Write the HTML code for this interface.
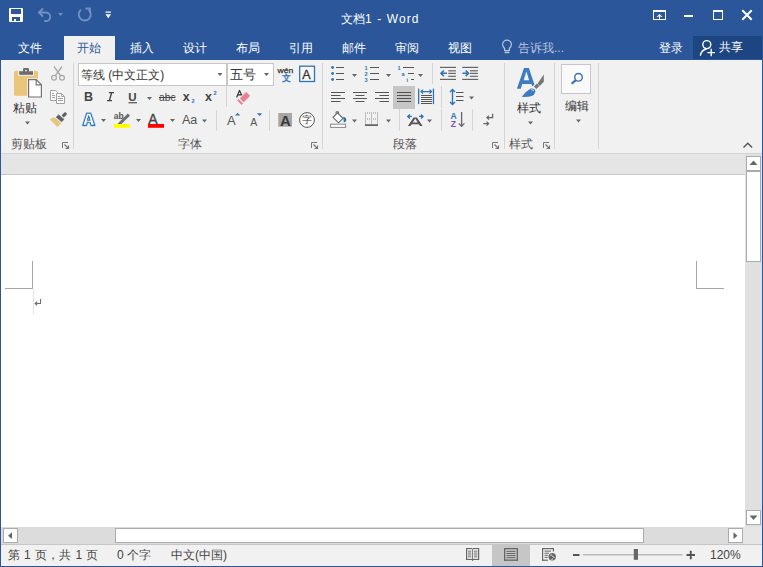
<!DOCTYPE html>
<html><head><meta charset="utf-8">
<style>
*{margin:0;padding:0;box-sizing:border-box}
html,body{width:763px;height:567px;overflow:hidden;background:#2B579A;font-family:"Liberation Sans",sans-serif;position:relative}
.a{position:absolute}
.t{position:absolute;font-size:12px;line-height:14px;white-space:nowrap;color:#444}
.w{color:#fff}
</style></head><body>
<!-- title -->
<div class="t w" style="left:341px;top:12px;">文档<span style="letter-spacing:1.1px">1 - Word</span></div>

<svg class="a" style="left:0;top:0" width="763" height="60" viewBox="0 0 763 60">
 <!-- save -->
 <rect x="9" y="8" width="14" height="14" rx="1" fill="#fff"/>
 <rect x="11" y="9" width="10" height="5" fill="#2B579A"/>
 <rect x="12" y="17" width="8" height="4" fill="#2B579A"/>
 <rect x="14" y="19" width="2" height="2" fill="#fff"/>
 <!-- undo -->
 <g stroke="#7391C0" stroke-width="1.8" fill="none" stroke-linecap="round">
  <path d="M39 12.5H46A4.2 4.2 0 0 1 46 21H45"/>
  <path d="M42.5 9L39 12.5L42.5 16"/>
 </g>
 <path d="M58 13h5l-2.5 3z" fill="#7391C0"/>
 <!-- redo/repeat -->
 <g stroke="#7391C0" stroke-width="1.8" fill="none">
  <path d="M81 9.8A6 6 0 1 0 88.5 9.8"/>
  <path d="M85.5 8.5H90V13"/>
 </g>
 <!-- customize -->
 <rect x="105.5" y="11.5" width="5.5" height="1.2" fill="#fff"/>
 <path d="M105.5 14.3h5.5l-2.75 4z" fill="#fff"/>
 <!-- window controls -->
 <g fill="#fff">
  <rect x="653" y="10" width="13" height="2"/>
  <rect x="653" y="10" width="1" height="10"/>
  <rect x="665" y="10" width="1" height="10"/>
  <rect x="653" y="19" width="13" height="1"/>
  <rect x="659" y="14.5" width="1" height="5"/>
  <path d="M656.5 17L659.5 14L662.5 17H661L659.5 15.5L658 17Z"/>
  <rect x="684" y="15" width="9" height="2"/>
  <rect x="713" y="10" width="10" height="2"/>
  <rect x="713" y="10" width="1" height="10"/>
  <rect x="722" y="10" width="1" height="10"/>
  <rect x="713" y="19" width="10" height="1"/>
 </g>
 <path d="M742.3 10.3L751.7 19.7M751.7 10.3L742.3 19.7" stroke="#fff" stroke-width="2"/>
 <!-- lightbulb -->
 <g fill="none" stroke="#B9C6DC" stroke-width="1.2">
  <path d="M504.6 50.5V48.5C503.2 47 502.6 45.8 502.6 44.6A4.4 4.4 0 0 1 511.4 44.6C511.4 45.8 510.8 47 509.4 48.5V50.5Z"/>
 </g>
 <rect x="504.6" y="51.6" width="4.8" height="1.6" fill="#B9C6DC"/>
 <!-- share person -->
 <g fill="none" stroke="#fff" stroke-width="1.4">
  <circle cx="706.8" cy="44.6" r="4"/>
  <path d="M700.3 55.6C701 52 703.5 49.6 706.5 49"/>
  <path d="M711.2 48.8V56.3M707.4 52.6H714.9"/>
 </g>
</svg>

<!-- tabs -->
<div class="a" style="left:64px;top:36px;width:51px;height:24px;background:#F1F1F1"></div>
<div class="t w" style="left:18px;top:41px">文件</div>
<div class="t" style="left:77px;top:41px;color:#2B579A">开始</div>
<div class="t w" style="left:130px;top:41px">插入</div>
<div class="t w" style="left:183px;top:41px">设计</div>
<div class="t w" style="left:236px;top:41px">布局</div>
<div class="t w" style="left:289px;top:41px">引用</div>
<div class="t w" style="left:342px;top:41px">邮件</div>
<div class="t w" style="left:395px;top:41px">审阅</div>
<div class="t w" style="left:448px;top:41px">视图</div>
<div class="t" style="left:518px;top:41px;color:#B9C6DC">告诉我...</div>
<div class="t w" style="left:659px;top:41px">登录</div>
<div class="a" style="left:693px;top:36px;width:69px;height:23px;background:#1C4581"></div>
<div class="t w" style="left:719px;top:40px">共享</div>
<!-- person icon redrawn over share bg -->
<svg class="a" style="left:0;top:0" width="763" height="60" viewBox="0 0 763 60">
 <g fill="none" stroke="#fff" stroke-width="1.4">
  <circle cx="706.8" cy="44.6" r="4"/>
  <path d="M700.3 55.6C701 52 703.5 49.6 706.5 49"/>
  <path d="M711.2 48.8V56.3M707.4 52.6H714.9"/>
 </g>
</svg>

<!-- ribbon -->
<div class="a" style="left:1px;top:60px;width:761px;height:93px;background:#F1F1F1"></div>
<div class="a" style="left:1px;top:153px;width:761px;height:1px;background:#D5D5D5"></div>
<!-- combo boxes -->
<div class="a" style="left:78px;top:63px;width:149px;height:23px;background:#fff;border:1px solid #C6C6C6"></div>
<div class="a" style="left:227px;top:63px;width:47px;height:23px;background:#fff;border:1px solid #C6C6C6"></div>
<div class="t" style="left:81px;top:68px;color:#333">等线 (中文正文)</div>
<div class="t" style="left:229.5px;top:68px;color:#333;font-size:12.5px">五号</div>
<svg class="a" style="left:0;top:0" width="763" height="160" viewBox="0 0 763 160">
 <rect x="14" y="70.8" width="24" height="25" rx="1.5" fill="#EAC67A"/>
 <rect x="18" y="70" width="16" height="5.8" fill="#F1F1F1"/>
 <rect x="19.2" y="71.2" width="13.8" height="3.6" fill="#6D6D6D"/>
 <rect x="23" y="68" width="6" height="4" rx="1.3" fill="#6D6D6D"/>
 <circle cx="26" cy="70.6" r="0.9" fill="#F1F1F1"/>
 <path d="M27.2 78.2H36.8L42.8 84.2V98.4H27.2Z" fill="#F1F1F1"/>
 <path d="M28.6 79.6H36.2L41.4 84.8V97H28.6Z" fill="#fff" stroke="#737373" stroke-width="1.2"/>
 <path d="M36.2 79.6V84.8H41.4" fill="none" stroke="#737373" stroke-width="1.2"/>

 <g fill="none" stroke="#A9A9A9" stroke-width="1.3">
  <path d="M54 66.5L60.5 75.5M62 66.5L55.5 75.5"/>
  <circle cx="54" cy="77.8" r="2.4"/>
  <circle cx="62" cy="77.8" r="2.4"/>
 </g>

 <g stroke="#A2A2A2" stroke-width="1">
  <path d="M50.5 90.5H55.5L57.5 92.5V100.5H50.5Z" fill="#FBFBFB"/>
  <path d="M56.5 93.5H61.5L64.5 96.5V103.5H56.5Z" fill="#FBFBFB"/>
  <path d="M61.5 93.5V96.5H64.5" fill="none"/>
 </g>
 <g fill="#A2A2A2">
  <rect x="52" y="93" width="2" height="1"/><rect x="52" y="95" width="3" height="1"/><rect x="52" y="97" width="3" height="1"/>
  <rect x="58" y="96" width="2" height="1"/><rect x="58" y="98" width="5" height="1"/><rect x="58" y="100" width="5" height="1"/>
 </g>

 <path d="M50 119.3L54.5 117.6L61 123.2L57.4 126.8Z" fill="#E8C47E" stroke="#E8C47E" stroke-width="0.5" stroke-linejoin="round"/>
 <path d="M58.6 114.8L64 119.4L61.6 121.8L56.2 117.2Z" fill="#606060" stroke="#606060" stroke-width="0.6" stroke-linejoin="round"/>
 <path d="M61.6 115.2L64.4 112.4Q65.2 111.8 66 112.6L66.6 113.2Q67.2 114 66.6 114.8L63.8 117.4Z" fill="#606060"/>
<g fill="none" stroke="#777" stroke-width="1"><path d="M62.5 148V142.5H68"/></g><path d="M64.5 144.5L68.5 148.5M65.5 148.5H68.5V145.5" stroke="#777" stroke-width="1.2" fill="none"/><g fill="none" stroke="#777" stroke-width="1"><path d="M311.5 148V142.5H317"/></g><path d="M313.5 144.5L317.5 148.5M314.5 148.5H317.5V145.5" stroke="#777" stroke-width="1.2" fill="none"/><g fill="none" stroke="#777" stroke-width="1"><path d="M492.5 148V142.5H498"/></g><path d="M494.5 144.5L498.5 148.5M495.5 148.5H498.5V145.5" stroke="#777" stroke-width="1.2" fill="none"/><g fill="none" stroke="#777" stroke-width="1"><path d="M543.5 148V142.5H549"/></g><path d="M545.5 144.5L549.5 148.5M546.5 148.5H549.5V145.5" stroke="#777" stroke-width="1.2" fill="none"/><rect x="73" y="63" width="1" height="86" fill="#D5D5D5"/><rect x="322" y="63" width="1" height="86" fill="#D5D5D5"/><rect x="504" y="63" width="1" height="86" fill="#D5D5D5"/><rect x="554" y="63" width="1" height="86" fill="#D5D5D5"/><rect x="598" y="63" width="1" height="86" fill="#D5D5D5"/><rect x="226" y="86" width="1" height="21" fill="#D5D5D5"/><rect x="216" y="110" width="1" height="21" fill="#D5D5D5"/><rect x="269" y="110" width="1" height="21" fill="#D5D5D5"/><rect x="432" y="63" width="1" height="21" fill="#D5D5D5"/><rect x="441" y="86" width="1" height="22" fill="#D5D5D5"/><rect x="399" y="109" width="1" height="22" fill="#D5D5D5"/><rect x="441" y="109" width="1" height="22" fill="#D5D5D5"/><rect x="472" y="109" width="1" height="22" fill="#D5D5D5"/><path d="M25 121.5h5l-2.5 3z" fill="#666"/><path d="M147 97h5l-2.5 3z" fill="#666"/><path d="M101 119h5l-2.5 3z" fill="#666"/><path d="M136 119h5l-2.5 3z" fill="#666"/><path d="M170 119h5l-2.5 3z" fill="#666"/><path d="M202 119.5h5l-2.5 3z" fill="#666"/><path d="M217.5 73h5l-2.5 3z" fill="#666"/><path d="M264 73h5l-2.5 3z" fill="#666"/><path d="M352 74h5l-2.5 3z" fill="#666"/><path d="M386 74h5l-2.5 3z" fill="#666"/><path d="M418 74h5l-2.5 3z" fill="#666"/><path d="M469 96.5h5l-2.5 3z" fill="#666"/><path d="M352 119.5h5l-2.5 3z" fill="#666"/><path d="M386 119.5h5l-2.5 3z" fill="#666"/><path d="M427 119.5h5l-2.5 3z" fill="#666"/><path d="M528 121.5h5l-2.5 3z" fill="#666"/><path d="M576 119.5h5l-2.5 3z" fill="#666"/>
 <text x="84" y="101.3" font-family="Liberation Sans" font-weight="bold" font-size="12.5" fill="#444">B</text>
 <path d="M108.9 92.6H114M107 100.6H112M111.6 92.8L109.4 100.4" stroke="#444" stroke-width="1.4" fill="none"/>
 <text x="128.2" y="101.3" font-family="Liberation Sans" font-weight="bold" font-size="11.5" fill="#444">U</text>
 <rect x="128.5" y="102.2" width="8.5" height="1.1" fill="#444"/>
 <text x="159" y="101" font-family="Liberation Sans" font-size="10.5" fill="#444" textLength="16.5" lengthAdjust="spacingAndGlyphs">abc</text>
 <rect x="159" y="97" width="16.5" height="1" fill="#444"/>
 <text x="182.8" y="100.9" font-family="Liberation Sans" font-weight="bold" font-size="12.5" fill="#444">x</text>
 <text x="191.6" y="102.9" font-family="Liberation Sans" font-weight="bold" font-size="5.6" fill="#2E75B6">2</text>
 <text x="205" y="100.9" font-family="Liberation Sans" font-weight="bold" font-size="12.5" fill="#444">x</text>
 <text x="213.6" y="95.3" font-family="Liberation Sans" font-weight="bold" font-size="5.6" fill="#2E75B6">2</text>

 <path d="M236.6 97.4L239.5 90.4L241.8 95.2M237.8 94.9H241.4" stroke="#333" stroke-width="1.2" fill="none" stroke-linejoin="round"/>
 <path d="M240.4 98.3L246.1 92.4L249.6 96L243.6 101.8Z" fill="#E8818F" stroke="#E8818F" stroke-width="1" stroke-linejoin="round"/>
 <path d="M237.6 100.5L238.7 99.4L242.7 103.4L241.6 104.5Z" fill="#E8818F" stroke="#E8818F" stroke-width="0.8" stroke-linejoin="round"/>

 <path d="M86.7 113.3H90.7L94.7 125.4H91.1L90.2 122.3H87.3L86.4 125.4H82.9ZM88.7 115.8L87.3 120.3H90.1Z" fill="none" stroke="#9DC3E6" stroke-width="2.6" stroke-linejoin="round" opacity="0.6"/>
 <path d="M86.7 113.3H90.7L94.7 125.4H91.1L90.2 122.3H87.3L86.4 125.4H82.9ZM88.7 115.8L87.3 120.3H90.1Z" fill="#fff" fill-rule="evenodd" stroke="#2E75B6" stroke-width="1.1" stroke-linejoin="round"/>

 <text x="113.8" y="118.8" font-family="Liberation Sans" font-weight="bold" font-size="8.5" fill="#555">ab</text>
 <path d="M117.8 123.5L127.8 113.5L130 115.7L120 125.2Z" fill="#6E6E6E"/>
 <rect x="114" y="124" width="16" height="3.8" fill="#FFFF00"/>

 <text x="148.3" y="123.6" font-family="Liberation Sans" font-size="14" fill="#444" stroke="#444" stroke-width="0.35">A</text>
 <rect x="148" y="124" width="16" height="3.8" fill="#FF0000"/>
 <text x="182" y="124.2" font-family="Liberation Sans" font-size="12.5" fill="#555">Aa</text>
 <text x="227" y="125.4" font-family="Liberation Sans" font-size="13" fill="#555">A</text>
 <path d="M235 115.5h5.2l-2.6-2.8z" fill="#2E75B6"/>
 <text x="250.2" y="125.8" font-family="Liberation Sans" font-size="10.5" fill="#555">A</text>
 <path d="M257 113.2h5.2l-2.6 2.8z" fill="#2E75B6"/>
 <rect x="278.3" y="113" width="13.7" height="13.7" fill="#A6A6A6"/>
 <text x="279.9" y="125.6" font-family="Liberation Sans" font-weight="bold" font-size="15" fill="#3A3A3A">A</text>
 <circle cx="307" cy="120" r="7.4" fill="#fff" stroke="#555" stroke-width="1"/>
 <rect x="299.7" y="66.2" width="14.8" height="15.3" fill="#F7F7F7" stroke="#2E75B6" stroke-width="1.3"/>
 <text x="302.3" y="78.5" font-family="Liberation Sans" font-size="12.5" fill="#333" stroke="#333" stroke-width="0.3">A</text>
 <text x="277.6" y="73.2" font-family="Liberation Sans" font-size="7.8" fill="#333" stroke="#333" stroke-width="0.25" textLength="15.8" lengthAdjust="spacingAndGlyphs">wén</text>
<circle cx="332.6" cy="67.5" r="1.4" fill="#2E75B6"/><rect x="336" y="67.0" width="8" height="1" fill="#555"/><circle cx="332.6" cy="73.5" r="1.4" fill="#2E75B6"/><rect x="336" y="73.0" width="8" height="1" fill="#555"/><circle cx="332.6" cy="79.5" r="1.4" fill="#2E75B6"/><rect x="336" y="79.0" width="8" height="1" fill="#555"/><text x="364.6" y="69.7" font-family="Liberation Sans" font-weight="bold" font-size="5.6" fill="#2E75B6">1</text><rect x="370" y="67.0" width="9" height="1" fill="#555"/><text x="364.6" y="75.7" font-family="Liberation Sans" font-weight="bold" font-size="5.6" fill="#2E75B6">2</text><rect x="370" y="73.0" width="9" height="1" fill="#555"/><text x="364.6" y="81.7" font-family="Liberation Sans" font-weight="bold" font-size="5.6" fill="#2E75B6">3</text><rect x="370" y="79.0" width="9" height="1" fill="#555"/>
 <text x="397.6" y="69.7" font-family="Liberation Sans" font-weight="bold" font-size="5.6" fill="#2E75B6">1</text>
 <rect x="403" y="67" width="11" height="1" fill="#555"/>
 <text x="401.6" y="75.7" font-family="Liberation Sans" font-weight="bold" font-size="5.6" fill="#2E75B6">a</text>
 <rect x="408" y="73" width="6" height="1" fill="#555"/>
 <text x="406.6" y="81.7" font-family="Liberation Sans" font-weight="bold" font-size="5.6" fill="#2E75B6">i</text>
 <rect x="411" y="79" width="3" height="1" fill="#555"/>

 <g fill="#666">
  <rect x="440" y="66.8" width="16" height="1.2"/><rect x="448.3" y="70.2" width="7.6" height="1.2"/>
  <rect x="448.3" y="72.8" width="7.6" height="1.2"/><rect x="448.3" y="75.7" width="7.6" height="1.2"/>
  <rect x="440" y="78.8" width="16" height="1.2"/>
  <rect x="462.2" y="66.8" width="16" height="1.2"/><rect x="469.9" y="70.2" width="8" height="1.2"/>
  <rect x="469.9" y="72.8" width="8" height="1.2"/><rect x="469.9" y="75.7" width="8" height="1.2"/>
  <rect x="462.2" y="78.8" width="16" height="1.2"/>
 </g>
 <g fill="none" stroke="#2E75B6" stroke-width="1.6">
  <path d="M441 73.3H447M443.8 70.5L441 73.3L443.8 76.1"/>
  <path d="M462.5 73.3H468.5M465.7 70.5L468.5 73.3L465.7 76.1"/>
 </g>
<rect x="331" y="92" width="14" height="1" fill="#555"/><rect x="331" y="95" width="9.5" height="1" fill="#555"/><rect x="331" y="98" width="14" height="1" fill="#555"/><rect x="331" y="101" width="9.5" height="1" fill="#555"/><rect x="353.0" y="92" width="14" height="1" fill="#555"/><rect x="355.5" y="95" width="9" height="1" fill="#555"/><rect x="353.0" y="98" width="14" height="1" fill="#555"/><rect x="355.5" y="101" width="9" height="1" fill="#555"/><rect x="375" y="92" width="14" height="1" fill="#555"/><rect x="379.5" y="95" width="9.5" height="1" fill="#555"/><rect x="375" y="98" width="14" height="1" fill="#555"/><rect x="379.5" y="101" width="9.5" height="1" fill="#555"/><rect x="393" y="86" width="22" height="23" fill="#C6C6C6"/><rect x="397" y="92" width="14" height="1" fill="#505050"/><rect x="397" y="95" width="14" height="1" fill="#505050"/><rect x="397" y="98" width="14" height="1" fill="#505050"/><rect x="397" y="101" width="14" height="1" fill="#505050"/>
 <rect x="418" y="88.6" width="1.3" height="15.5" fill="#2E75B6"/>
 <rect x="432.8" y="88.6" width="1.3" height="15.5" fill="#2E75B6"/>
 <g fill="none" stroke="#2E75B6" stroke-width="1.3"><path d="M421 91.6H431.5M423 89.6L421 91.6L423 93.6M429.5 89.6L431.5 91.6L429.5 93.6"/></g>
<rect x="421" y="95" width="11" height="1" fill="#555"/><rect x="421" y="97" width="11" height="1" fill="#555"/><rect x="421" y="99" width="11" height="1" fill="#555"/><rect x="421" y="101" width="11" height="1" fill="#555"/><rect x="421" y="103" width="11" height="1" fill="#555"/>
 <g fill="none" stroke="#2E75B6" stroke-width="1.4"><path d="M452.5 89.5V104.5M450 92L452.5 89.5L455 92M450 102L452.5 104.5L455 102"/></g>
<rect x="456" y="92" width="7.5" height="1" fill="#555"/><rect x="456" y="96" width="7.5" height="1" fill="#555"/><rect x="456" y="100" width="7.5" height="1" fill="#555"/>
 <path d="M337.5 112.8L343 118.3L338.5 122.8L333 117.3Z" fill="#fff" stroke="#666" stroke-width="1.1"/>
 <path d="M336 113.5V111.8H338.5V114" fill="none" stroke="#666" stroke-width="1"/>
 <path d="M343.2 116.8Q346.8 117.5 346.2 120.5Q345.5 122.5 343.8 122.5Z" fill="#2E75B6"/>
 <rect x="330.6" y="124.2" width="15" height="3.2" fill="#fff" stroke="#888" stroke-width="1"/>
<rect x="365" y="112.5" width="1" height="1" fill="#8A8A8A"/><rect x="365" y="114.5" width="1" height="1" fill="#8A8A8A"/><rect x="365" y="116.5" width="1" height="1" fill="#8A8A8A"/><rect x="365" y="118.5" width="1" height="1" fill="#8A8A8A"/><rect x="365" y="120.5" width="1" height="1" fill="#8A8A8A"/><rect x="365" y="122.5" width="1" height="1" fill="#8A8A8A"/><rect x="367" y="112.5" width="1" height="1" fill="#8A8A8A"/><rect x="367" y="118.5" width="1" height="1" fill="#8A8A8A"/><rect x="369" y="112.5" width="1" height="1" fill="#8A8A8A"/><rect x="369" y="118.5" width="1" height="1" fill="#8A8A8A"/><rect x="371" y="112.5" width="1" height="1" fill="#8A8A8A"/><rect x="371" y="114.5" width="1" height="1" fill="#8A8A8A"/><rect x="371" y="116.5" width="1" height="1" fill="#8A8A8A"/><rect x="371" y="118.5" width="1" height="1" fill="#8A8A8A"/><rect x="371" y="120.5" width="1" height="1" fill="#8A8A8A"/><rect x="371" y="122.5" width="1" height="1" fill="#8A8A8A"/><rect x="373" y="112.5" width="1" height="1" fill="#8A8A8A"/><rect x="373" y="118.5" width="1" height="1" fill="#8A8A8A"/><rect x="375" y="112.5" width="1" height="1" fill="#8A8A8A"/><rect x="375" y="118.5" width="1" height="1" fill="#8A8A8A"/><rect x="377" y="112.5" width="1" height="1" fill="#8A8A8A"/><rect x="377" y="114.5" width="1" height="1" fill="#8A8A8A"/><rect x="377" y="116.5" width="1" height="1" fill="#8A8A8A"/><rect x="377" y="118.5" width="1" height="1" fill="#8A8A8A"/><rect x="377" y="120.5" width="1" height="1" fill="#8A8A8A"/><rect x="377" y="122.5" width="1" height="1" fill="#8A8A8A"/><rect x="365" y="124.3" width="13" height="1.6" fill="#555"/>
 <g fill="none" stroke="#2E75B6" stroke-width="1.4"><path d="M407.8 116.4H411.8M409.8 114.4L407.8 116.4L409.8 118.4M419 116.4H423M421 114.4L423 116.4L421 118.4"/></g>
 <path d="M413.6 117.5H416.9L422.6 126H420L418.9 124.2H411.6L410.5 126H407.9ZM412.8 122.4H417.7L415.25 118.6Z" fill="#555"/>

 <text x="450.6" y="118.6" font-family="Liberation Sans" font-weight="bold" font-size="8.6" fill="#2E75B6">A</text>
 <text x="450.8" y="126.8" font-family="Liberation Sans" font-weight="bold" font-size="8.6" fill="#7F4FB4">Z</text>
 <g fill="none" stroke="#666" stroke-width="1.3"><path d="M461.6 112V126.4M458.8 123.4L461.6 126.4L464.4 123.4"/></g>

 <g fill="none" stroke="#666" stroke-width="1.3">
  <path d="M492.6 113.8V117.6H487M489 115.6L487 117.6L489 119.6"/>
  <path d="M483.3 123.6H488.6M486.6 121.6L488.6 123.6L486.6 125.6"/>
 </g>

 <path d="M524 68H528.9L534.4 84.6L532.6 86.6L531.4 84.1H522.2L520.8 88.8H516.9ZM526.4 71.3L523.7 80.2H529.1Z" fill="#3F7BC0" fill-rule="evenodd"/>
 <path d="M537.6 83.6L543.8 74.6V81.8L539.8 86Z" fill="#767676"/>
 <path d="M533.9 86.6L537 83.4L539.4 85.9L536.3 89Z" fill="#767676"/>
 <path d="M521.7 96.8Q526 91.2 530.8 88.6Q535 87.8 535.3 91.2Q534.8 95 531 96.2Q527 97.2 521.7 96.8Z" fill="#3F7BC0"/>
 <path d="M530.4 89.6Q533.8 88.6 534 91.8Q532.8 90.2 530.4 89.6Z" fill="#fff"/>

 <rect x="561.5" y="64.5" width="29" height="29" fill="#FAFAFA" stroke="#C6C6C6" stroke-width="1"/>
 <circle cx="578.5" cy="77.3" r="3.8" fill="none" stroke="#3A72B0" stroke-width="1.4"/>
 <path d="M575.8 80.1L571.6 83.8" stroke="#3A72B0" stroke-width="2.1"/>
<path d="M743.5 147.5L747.8 143.2L752.1 147.5" fill="none" stroke="#555" stroke-width="1.4"/></svg>
<div class="t" style="left:13px;top:101px;color:#333">粘贴</div>
<div class="t" style="left:517px;top:101px;color:#333">样式</div>
<div class="t" style="left:565px;top:99px;color:#333">编辑</div>
<div class="t" style="left:281.5px;top:73px;font-size:9px;line-height:10px;color:#2E75B6;font-weight:bold">文</div>
<div class="t" style="left:302px;top:113.5px;font-size:10px;line-height:12px;color:#333">字</div>
<div class="t" style="left:11px;top:137px;color:#555">剪贴板</div>
<div class="t" style="left:178px;top:137px;color:#555">字体</div>
<div class="t" style="left:393px;top:137px;color:#555">段落</div>
<div class="t" style="left:509px;top:137px;color:#555">样式</div>

<!-- gray strip -->
<div class="a" style="left:1px;top:154px;width:744px;height:21px;background:#E5E5E5"></div>
<div class="a" style="left:1px;top:174px;width:744px;height:1px;background:#C8C8C8"></div>
<!-- doc -->
<div class="a" style="left:1px;top:175px;width:744px;height:352px;background:#fff"></div>
<div class="a" style="left:32px;top:261px;width:1px;height:28px;background:#A6A6A6"></div>
<div class="a" style="left:5px;top:288px;width:28px;height:1px;background:#A6A6A6"></div>
<div class="a" style="left:696px;top:261px;width:1px;height:28px;background:#A6A6A6"></div>
<div class="a" style="left:696px;top:288px;width:28px;height:1px;background:#A6A6A6"></div>
<div class="a" style="left:33px;top:290px;width:1px;height:24px;background:#E3E3E3"></div>
<svg class="a" style="left:0;top:280px" width="60" height="40" viewBox="0 280 60 40">
 <path d="M40.5 299V303.5H36.5" fill="none" stroke="#707070" stroke-width="1.1"/><path d="M34.3 303.5L37.2 301V306Z" fill="#707070"/>
</svg>

<!-- vertical scrollbar -->
<div class="a" style="left:745px;top:154px;width:17px;height:373px;background:#E0E0E0"></div>
<div class="a" style="left:746px;top:156px;width:15px;height:15px;background:#fff;border:1px solid #ABABAB"></div>
<div class="a" style="left:746px;top:171px;width:15px;height:91px;background:#fff;border:1px solid #ABABAB"></div>
<div class="a" style="left:746px;top:510px;width:15px;height:15px;background:#fff;border:1px solid #ABABAB"></div>
<!-- horizontal scrollbar -->
<div class="a" style="left:1px;top:527px;width:742px;height:17px;background:#DCDCDC"></div>
<div class="a" style="left:743px;top:527px;width:19px;height:17px;background:#E6E6E6"></div>
<div class="a" style="left:3px;top:528px;width:15px;height:15px;background:#fff;border:1px solid #ABABAB"></div>
<div class="a" style="left:115px;top:528px;width:529px;height:15px;background:#fff;border:1px solid #ABABAB"></div>
<div class="a" style="left:728px;top:528px;width:15px;height:15px;background:#fff;border:1px solid #ABABAB"></div>
<svg class="a" style="left:0;top:150px" width="763" height="417" viewBox="0 150 763 417">
 <path d="M749.5 165L753.5 160.5L757.5 165Z" fill="#666"/>
 <path d="M749.5 515.5L753.5 520L757.5 515.5Z" fill="#666"/>
 <path d="M12 532.3V539L8 535.65Z" fill="#666"/>
 <path d="M733.5 532.3V539L737.5 535.65Z" fill="#666"/>
</svg>

<!-- status bar -->
<div class="a" style="left:1px;top:544px;width:761px;height:1px;background:#C6C6C6"></div>
<div class="a" style="left:1px;top:545px;width:761px;height:21px;background:#F1F1F1"></div>
<div class="a" style="left:492px;top:545px;width:38px;height:21px;background:#C6C6C6"></div>
<div class="t" style="left:8px;top:548px;letter-spacing:0.35px">第 1 页，共 1 页</div>
<div class="t" style="left:117px;top:548px">0 个字</div>
<div class="t" style="left:171px;top:548px">中文(中国)</div>
<div class="t" style="left:710px;top:548px">120%</div>
<svg class="a" style="left:0;top:540px" width="763" height="27" viewBox="0 540 763 27">
 <g fill="#666">
  <!-- read mode -->
  <rect x="466" y="548" width="1.2" height="12"/>
  <rect x="478" y="548" width="1.2" height="12"/>
  <rect x="466" y="548" width="6" height="1.1"/>
  <rect x="473" y="548" width="6" height="1.1"/>
  <rect x="466" y="558.9" width="6" height="1.1"/>
  <rect x="473" y="558.9" width="6" height="1.1"/>
  <rect x="472.2" y="548.5" width="0.9" height="12"/>
  <path d="M471 559L472.6 561L474.2 559Z"/>
  <rect x="468" y="550.7" width="3.3" height="0.9"/><rect x="468" y="552.6" width="3.3" height="0.9"/>
  <rect x="468" y="554.5" width="3.3" height="0.9"/><rect x="468" y="556.4" width="3.3" height="0.9"/>
  <rect x="474" y="550.7" width="3.3" height="0.9"/><rect x="474" y="552.6" width="3.3" height="0.9"/>
  <rect x="474" y="554.5" width="3.3" height="0.9"/><rect x="474" y="556.4" width="3.3" height="0.9"/>
  <!-- print layout -->
  <rect x="504" y="548" width="14" height="1.3"/>
  <rect x="504" y="559.5" width="14" height="1.3"/>
  <rect x="504" y="548" width="1.3" height="12.8"/>
  <rect x="516.7" y="548" width="1.3" height="12.8"/>
  <rect x="506.5" y="550.9" width="9" height="1"/>
  <rect x="506.5" y="553" width="9" height="1"/>
  <rect x="506.5" y="555.1" width="9" height="1"/>
  <rect x="506.5" y="557.2" width="9" height="1"/>
  <!-- web layout -->
  <rect x="542" y="548" width="12" height="1.2"/>
  <rect x="542" y="548" width="1.2" height="12.8"/>
  <rect x="542" y="559.6" width="6" height="1.2"/>
  <rect x="552.8" y="548" width="1.2" height="3.5"/>
  <rect x="544.5" y="550.6" width="6.5" height="1"/>
  <rect x="544.5" y="552.7" width="4.5" height="1"/>
  <rect x="544.5" y="554.8" width="3.5" height="1"/>
  <rect x="544.5" y="556.9" width="3.5" height="1"/>
 </g>
 <circle cx="552.2" cy="556.7" r="4.6" fill="#F1F1F1"/>
 <circle cx="552.2" cy="556.7" r="3.7" fill="#666"/>
 <path d="M550 555.2Q551.5 554.3 552.4 555.8Q553.2 557.6 554.6 557.4M551.5 559.8Q551.8 558.6 553 559" stroke="#F1F1F1" stroke-width="0.9" fill="none"/>
 <rect x="573" y="554" width="6.5" height="2" fill="#555"/>
 <rect x="583" y="554.3" width="99.5" height="1" fill="#A0A0A0"/>
 <rect x="633.8" y="549" width="4.2" height="10.8" fill="#666"/>
 <path d="M686.5 555H695M690.75 550.8V559.2" stroke="#555" stroke-width="1.9"/>
</svg>
</body></html>
